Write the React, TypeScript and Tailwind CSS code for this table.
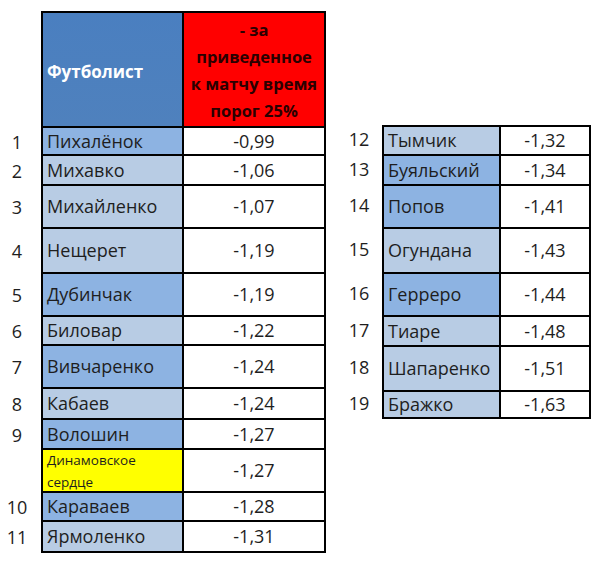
import React from "react";

type Row = { n?: string; name: string; value: string; h: number; tone: "mid" | "light" | "yellow" };

const leftRows: Row[] = [
  { n: "1", name: "Пихалёнок", value: "-0,99", h: 28, tone: "mid" },
  { n: "2", name: "Михавко", value: "-1,06", h: 30, tone: "light" },
  { n: "3", name: "Михайленко", value: "-1,07", h: 43, tone: "light" },
  { n: "4", name: "Нещерет", value: "-1,19", h: 45, tone: "light" },
  { n: "5", name: "Дубинчак", value: "-1,19", h: 43, tone: "mid" },
  { n: "6", name: "Биловар", value: "-1,22", h: 29, tone: "light" },
  { n: "7", name: "Вивчаренко", value: "-1,24", h: 43, tone: "mid" },
  { n: "8", name: "Кабаев", value: "-1,24", h: 31, tone: "light" },
  { n: "9", name: "Волошин", value: "-1,27", h: 30, tone: "mid" },
  { name: "Динамовское сердце", value: "-1,27", h: 43, tone: "yellow" },
  { n: "10", name: "Караваев", value: "-1,28", h: 29, tone: "mid" },
  { n: "11", name: "Ярмоленко", value: "-1,31", h: 31, tone: "light" },
];

const rightRows: Row[] = [
  { n: "12", name: "Тымчик", value: "-1,32", h: 29, tone: "light" },
  { n: "13", name: "Буяльский", value: "-1,34", h: 30, tone: "mid" },
  { n: "14", name: "Попов", value: "-1,41", h: 43, tone: "mid" },
  { n: "15", name: "Огундана", value: "-1,43", h: 45, tone: "light" },
  { n: "16", name: "Герреро", value: "-1,44", h: 43, tone: "mid" },
  { n: "17", name: "Тиаре", value: "-1,48", h: 30, tone: "light" },
  { n: "18", name: "Шапаренко", value: "-1,51", h: 45, tone: "light" },
  { n: "19", name: "Бражко", value: "-1,63", h: 27, tone: "light" },
];

const toneBg = {
  mid: "bg-[#8db3e2]",
  light: "bg-[#b8cce4]",
  yellow: "bg-[#ffff00]",
};

function Numbers({ rows, width }: { rows: Row[]; width: string }) {
  return (
    <div className={`${width} flex flex-col`}>
      {rows.map((r, i) => (
        <div key={i} style={{ height: r.h }} className="flex items-center justify-center text-[18px]">
          {r.n}
        </div>
      ))}
    </div>
  );
}

function Table({ rows, nameW, valueW }: { rows: Row[]; nameW: string; valueW: string }) {
  return (
    <div className="flex flex-col border-l-2 border-t-2 border-black">
      {rows.map((r, i) => (
        <div key={i} style={{ height: r.h }} className="flex">
          <div
            className={`${nameW} ${toneBg[r.tone]} flex items-center border-b-2 border-r-2 border-black pl-[4px] ${
              r.tone === "yellow" ? "text-[13.5px] leading-[22px]" : "text-[18px]"
            }`}
          >
            {r.tone === "yellow" ? <span className="w-[100px]">{r.name}</span> : r.name}
          </div>
          <div className={`${valueW} flex items-center justify-center border-b-2 border-r-2 border-black bg-white text-[18px]`}>
            {r.value}
          </div>
        </div>
      ))}
    </div>
  );
}

export default function App() {
  return (
    <div className="h-[561px] w-[600px] bg-white text-[#1e1e1e]" style={{ fontFamily: "'Open Sans', sans-serif" }}>
      <div className="flex items-start pt-[11px]">
        <div className="flex items-start">
          <div className="flex flex-col">
            <div className="h-[117px] w-[34px]" />
            <Numbers rows={leftRows} width="w-[34px]" />
          </div>
          <div className="ml-[7px] flex flex-col">
            <div className="flex h-[117px] border-l-2 border-t-2 border-black">
              <div className="flex w-[141px] items-center border-b-2 border-r-2 border-black bg-gradient-to-b from-[#4a7fc0] to-[#4f81bd] pl-[4px] pt-[4px] text-[17px] font-bold text-white">
                Футболист
              </div>
              <div className="flex w-[142px] items-end justify-center border-b-2 border-r-2 border-black bg-[#ff0000] pb-[2px] text-center text-[16.5px] font-bold leading-[27px] text-[#2a0000]">
                <span>
                  - за
                  <br />
                  приведенное
                  <br />
                  к матчу время
                  <br />
                  порог 25%
                </span>
              </div>
            </div>
            <div className="-mt-[2px]">
              <Table rows={leftRows} nameW="w-[141px]" valueW="w-[142px]" />
            </div>
          </div>
        </div>
        <div className="ml-[13px] mt-[114px] flex items-start">
          <Numbers rows={rightRows} width="w-[40px]" />
          <div className="ml-[3px]">
            <Table rows={rightRows} nameW="w-[117px]" valueW="w-[90px]" />
          </div>
        </div>
      </div>
    </div>
  );
}
